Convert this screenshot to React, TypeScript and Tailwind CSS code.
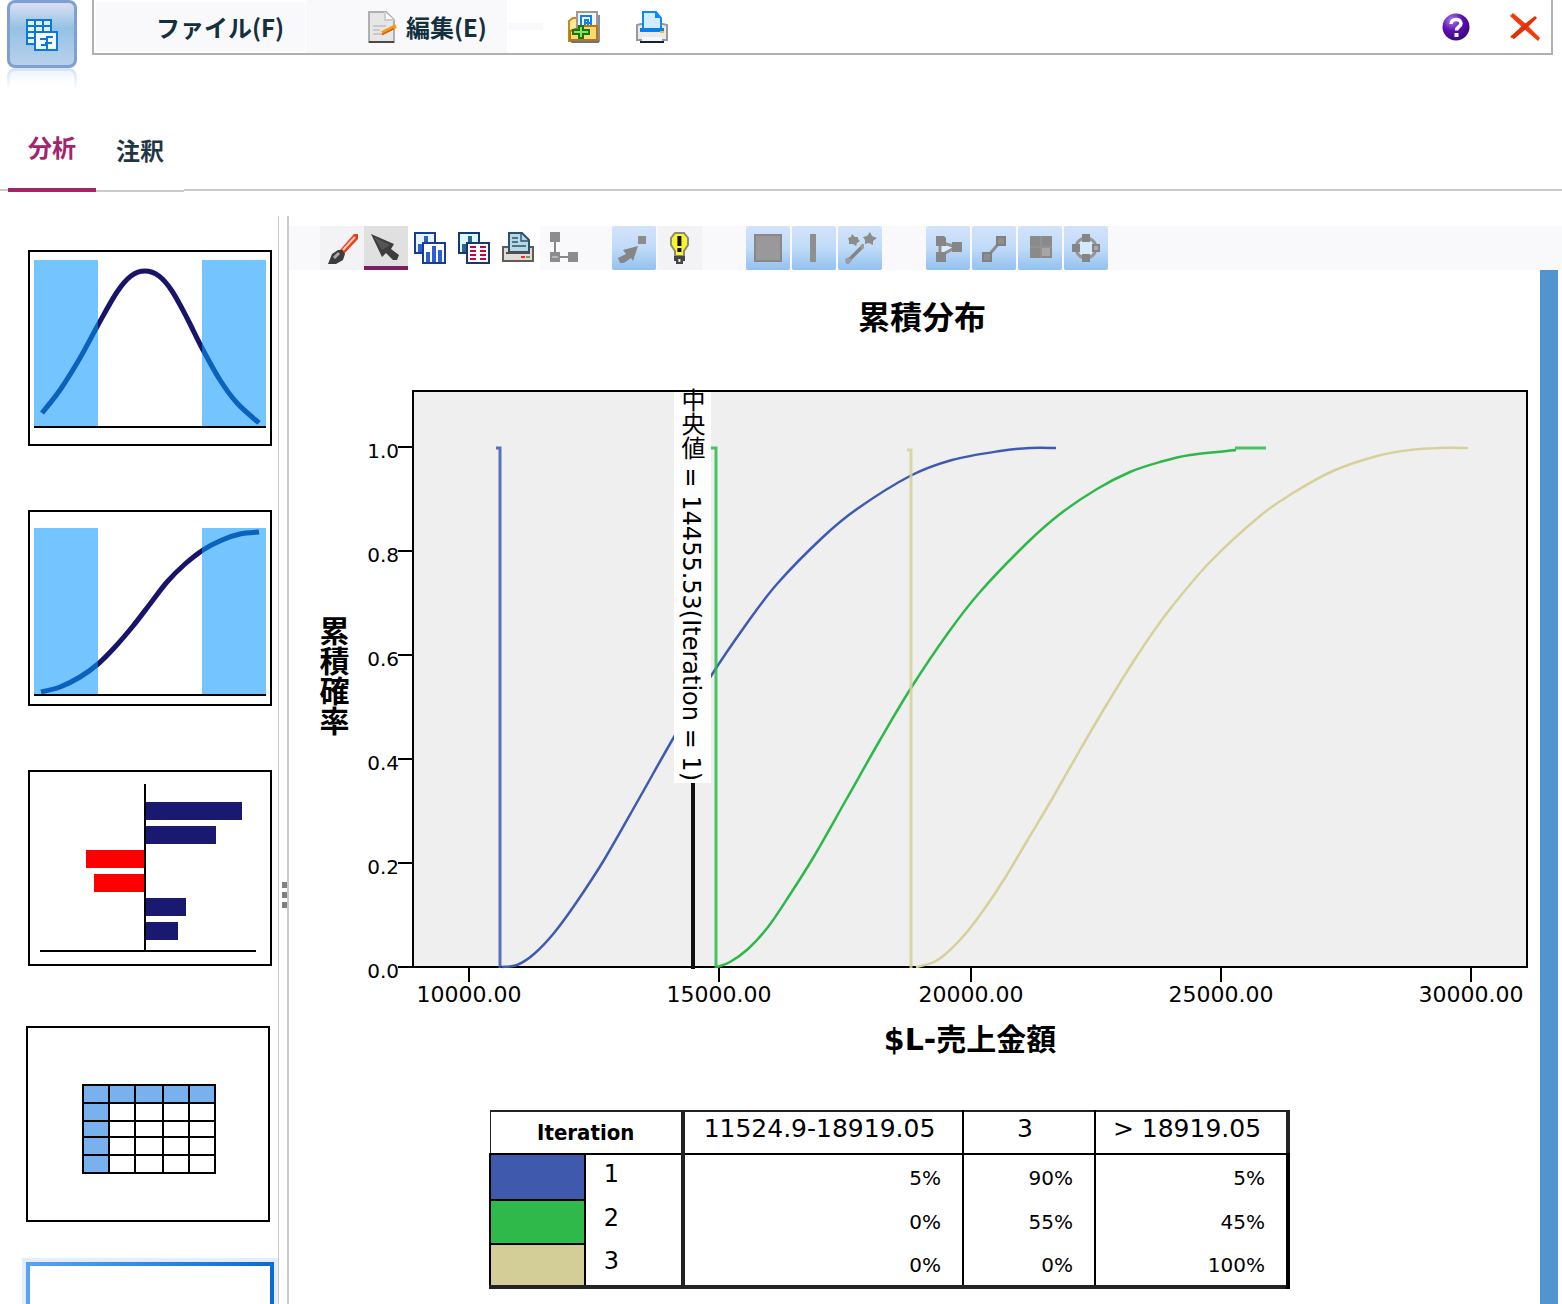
import type { ReactNode } from 'react';

type Point = [number, number];

// Catmull-Rom spline through the sample points
function smooth(points: Point[]) {
  let d = `M${points[0][0]} ${points[0][1]}`;
  for (let i = 0; i < points.length - 1; i++) {
    const p0 = points[i - 1] ?? points[i];
    const p1 = points[i];
    const p2 = points[i + 1];
    const p3 = points[i + 2] ?? p2;
    d += ` C${p1[0] + (p2[0] - p0[0]) / 6} ${p1[1] + (p2[1] - p0[1]) / 6} ${p2[0] - (p3[0] - p1[0]) / 6} ${
      p2[1] - (p3[1] - p1[1]) / 6
    } ${p2[0]} ${p2[1]}`;
  }
  return d;
}

const series: { color: string; drop: string; points: Point[] }[] = [
  {
    color: '#3f5bb0',
    drop: 'M207 178H211V698',
    points: [
      [213, 697], [228, 695], [245, 684], [265, 663], [287, 633], [315, 590], [351, 527], [385, 467],
      [422, 406], [456, 356], [488, 314], [534, 267], [568, 239], [621, 206], [663, 190], [711, 181], [741, 178], [767, 178],
    ],
  },
  {
    color: '#2db84a',
    drop: 'M422 178H427V698M946 178H977',
    points: [
      [428, 697], [441, 692], [459, 679], [479, 657], [500, 626], [524, 588], [557, 530], [591, 470],
      [622, 418], [659, 363], [691, 322], [738, 273], [771, 244], [808, 219], [841, 202], [871, 192], [901, 185],
      [947, 180],
    ],
  },
  {
    color: '#d6d09a',
    drop: 'M618 180H622V698',
    points: [
      [627, 697], [645, 692], [660, 681], [678, 662], [696, 638], [716, 608], [738, 571], [763, 529], [791, 480], [818, 434],
      [848, 386], [878, 343], [921, 292], [971, 246], [1004, 223], [1044, 201], [1088, 186], [1121, 180], [1151, 178], [1179, 178],
    ],
  },
];

const yTicks = [
  { label: '1.0', y: 177 },
  { label: '0.8', y: 281 },
  { label: '0.6', y: 385 },
  { label: '0.4', y: 489 },
  { label: '0.2', y: 593 },
  { label: '0.0', y: 697 },
];

const xTicks = [
  { label: '10000.00', x: 180 },
  { label: '15000.00', x: 430 },
  { label: '20000.00', x: 682 },
  { label: '25000.00', x: 932 },
  { label: '30000.00', x: 1182 },
];

const rows = [
  { id: '1', swatch: 'bg-[#3f5aac]', height: 'h-[46px]', values: ['5%', '90%', '5%'] },
  { id: '2', swatch: 'bg-[#2fb94a]', height: 'h-[44px]', values: ['0%', '55%', '45%'] },
  { id: '3', swatch: 'bg-[#d3ce97]', height: 'h-[43px]', values: ['0%', '0%', '100%'] },
];

const bell: Point[] = [
  [12, 161], [30, 138], [50, 106], [68, 73], [87, 40], [101, 24], [115, 19], [129, 24], [142, 39], [157, 66],
  [172, 96], [190, 128], [207, 151], [229, 171],
];

const sCurve: Point[] = [
  [11, 180], [30, 175], [50, 165], [68, 152], [85, 135], [103, 114], [120, 92], [137, 70], [155, 52], [173, 38],
  [192, 28], [210, 22], [229, 20],
];

function CurveThumb({ id, points, top, base }: { id: string; points: Point[]; top: number; base: number }) {
  const d = smooth(points);
  return (
    <svg viewBox="0 0 240 192" className="block w-full">
      <clipPath id={id}>
        <rect x="68" y="0" width="104" height="192" />
      </clipPath>
      <rect x="4" y={top} width="64" height={base - top} fill="#73c4ff" />
      <rect x="172" y={top} width="64" height={base - top} fill="#73c4ff" />
      <path d={d} fill="none" stroke="#0a62bd" strokeWidth="5" />
      <g clipPath={`url(#${id})`}>
        <rect x="68" y="0" width="104" height="192" fill="#fff" />
        <path d={d} fill="none" stroke="#17146a" strokeWidth="5" />
      </g>
      <rect x="4" y={base} width="232" height="2" />
    </svg>
  );
}

function TornadoThumb() {
  const bars = [
    [116, 30, 96], [116, 54, 70], [56, 78, 58], [64, 102, 50], [116, 126, 40], [116, 150, 32],
  ];
  return (
    <svg viewBox="0 0 240 192" className="block w-full">
      {bars.map(([x, y, w]) => (
        <rect key={y} x={x} y={y} width={w} height="18" fill={x < 100 ? '#f00' : '#191970'} />
      ))}
      <rect x="114" y="12" width="2" height="167" />
      <rect x="10" y="178" width="216" height="2" />
    </svg>
  );
}

function GridThumb() {
  return (
    <svg viewBox="0 0 240 192" className="block w-full">
      <rect x="54" y="56" width="134" height="18" fill="#79b0ee" />
      <rect x="54" y="56" width="27" height="90" fill="#79b0ee" />
      {[54, 80, 106, 134, 160, 186].map((x) => (
        <rect key={x} x={x} y="56" width="2" height="90" />
      ))}
      {[56, 74, 92, 108, 126, 144].map((y) => (
        <rect key={y} x="54" y={y} width="134" height="2" />
      ))}
    </svg>
  );
}

function Thumb({ label, children }: { label: string; children: ReactNode }) {
  return (
    <button aria-label={label} className="w-[244px] shrink-0 border-2 border-black bg-white">
      {children}
    </button>
  );
}

function ToolButton({ label, className, children }: { label: string; className?: string; children: ReactNode }) {
  return (
    <button aria-label={label} className={`size-11 shrink-0 ${className ?? ''}`}>
      <svg viewBox="0 0 22 22" className="block size-11">
        {children}
      </svg>
    </button>
  );
}

const blueTool = 'rounded-xs bg-linear-to-b from-[#d3e3fb] via-[#c0dbf8] to-[#92c1ef]';

function ToolBar() {
  return (
    <div className="flex bg-[#f9f9fb] pl-[31px]">
      <ToolButton label="brush" className="bg-[#f3f3f5]">
        <path d="M10 12L17 4H19V6.500L12 14Z" fill="#e8401c" />
        <path d="M11.500 12L17.500 5.500" stroke="#ffc9bd" strokeWidth="1" />
        <path d="M4 19L6 14L9 12H11L12.500 14L11.500 17L8 19Z" fill="#3c3c3c" />
        <path d="M7 16L9.500 13.500" stroke="#aaa" strokeWidth="1.500" />
      </ToolButton>
      <button aria-label="select" className="size-11 shrink-0 border-b-4 border-[#7d1f5e] bg-[#e0e0e0]">
        <svg viewBox="0 0 22 20" className="block w-11">
          <path d="M3.500 4L15 9L13.500 11.500L17.500 14.500L16.500 17L14.500 17L11 13.500L9 15.500Z" fill="#3d3d3d" />
          <path d="M5 5.500L13 9.500L9 12Z" fill="#555" />
        </svg>
      </button>
      <ToolButton label="charts" className="bg-white">
        <rect x="3.500" y="3.500" width="10" height="10" fill="#e9f3ff" stroke="#173f91" />
        <path d="M5 9H7V13H5ZM8 5H10V13H8Z" fill="#2c5fd4" />
        <rect x="7.500" y="8.500" width="11" height="10" fill="#fff" stroke="#173f91" />
        <path d="M9 13H11V18H9ZM12 10H14V18H12ZM15 12H17V18H15Z" fill="#2c5fd4" />
      </ToolButton>
      <ToolButton label="chart table" className="bg-white">
        <rect x="3.500" y="3.500" width="10" height="10" fill="#dcf7fb" stroke="#153a6f" />
        <path d="M8 5H10V9H8ZM5 9H7V13H5Z" fill="#2a6293" />
        <rect x="7.500" y="8.500" width="11" height="10" fill="#fff" stroke="#153a6f" />
        <path d="M9 10.500H12M9 12.500H12M9 14.500H12M9 16.500H12M14 10.500H17M14 12.500H17M14 14.500H17M14 16.500H17" stroke="#cc0048" />
      </ToolButton>
      <ToolButton label="print" className="bg-white">
        <rect x="3.500" y="10.500" width="15" height="7" fill="#dedbd8" stroke="#655a58" />
        <path d="M6.500 13V3.500H13L16.500 7V13Z" fill="#b9d8e4" stroke="#28546c" />
        <path d="M12.500 3.500V7.500H16.500M8 6H11M8 8H11M8 10H15" fill="none" stroke="#28546c" strokeWidth="0.700" />
        <path d="M5 13.500H17" stroke="#554b49" />
        <path d="M12.500 15.500H14.500" stroke="#f22" />
        <path d="M15 15.500H17" stroke="#5aa84f" />
      </ToolButton>
      <ToolButton label="hierarchy">
        <path d="M7.500 8V13M10 15.500H14" stroke="#888" />
        <path d="M5 3H10V8H5ZM5 13H10V18H5ZM14 13H19V18H14Z" fill="#8c8c8c" />
        <path d="M6 15.500H9" stroke="#b5b5b5" />
      </ToolButton>
      <div className="flex pl-7">
        <ToolButton label="point select" className={blueTool}>
          <rect x="13" y="5" width="4" height="4" fill="#8c8c8c" />
          <path d="M13 10L5.500 12L7 14L3 16L4 18.500H6L9.500 16L10.500 17.500Z" fill="#868686" />
        </ToolButton>
      </div>
      <div className="flex pl-0.5">
        <ToolButton label="hint" className="bg-[#f3f3f5]">
          <path d="M8.500 3.500H13L15 6V9.500L13 12.500V15H8.500V12.500L6.500 9.500V6Z" fill="#f8f52a" stroke="#8b8b72" />
          <path d="M8 15H13.500V17.500H12.500V19H9V17.500H8Z" fill="#444" />
          <path d="M9.700 5H11.700V10H9.700ZM9.700 11H11.700V13H9.700Z" fill="#111" />
          <path d="M10.700 16.500V18" stroke="#eee" />
        </ToolButton>
      </div>
      <div className="flex gap-0.5 pl-11">
        <ToolButton label="area" className={blueTool}>
          <rect x="4.500" y="4.500" width="13" height="13" fill="#999" stroke="#888" />
        </ToolButton>
        <ToolButton label="line" className={blueTool}>
          <rect x="9" y="4" width="3" height="14" fill="#8f8f8f" />
        </ToolButton>
        <ToolButton label="wand" className={blueTool}>
          <path d="M5 17.500L12.500 10" stroke="#858585" strokeWidth="1.800" />
          <path d="M3.500 16.500L5.500 15.500L7 17L5.500 19H4ZM11 10L12 9H13V11L12 12Z" fill="#9c9c9c" />
          <path d="M7 4L8.500 5.500H10L10 6.500L11 7.500L9.500 8.500L9 10L7.500 9H5.500V7.500L5 6L6.500 5.500Z" fill="#8c8c8c" />
          <path d="M16 3L17 5L19.500 6L17.500 7.500V9.500L15.500 8.500L13.500 9V7L12.500 5.500L14.500 5Z" fill="#8c8c8c" />
        </ToolButton>
      </div>
      <div className="flex gap-0.5 pl-11">
        <ToolButton label="polygon" className={blueTool}>
          <path d="M7 8V15L15 10.500Z" fill="#dcecff" stroke="#909090" strokeWidth="1.500" />
          <path d="M5 5H9L10 6V10H5ZM13 8H18V13H13ZM5 13H10V18H5Z" fill="#868686" />
        </ToolButton>
        <ToolButton label="segment" className={blueTool}>
          <path d="M8 15L14 8" stroke="#8c8c8c" strokeWidth="1.500" />
          <path d="M5 13H10V18H5ZM12 5H17V10H12Z" fill="#808080" />
          <path d="M6 14H9V17H6ZM13 6H16V9H13Z" fill="#8e8e8e" />
        </ToolButton>
        <ToolButton label="cells" className={blueTool}>
          <rect x="6" y="5" width="11" height="11" fill="#8a8a8a" />
          <path d="M11.500 5V16M6 10.500H17" stroke="#929292" />
          <rect x="12" y="11" width="4" height="4" fill="#a6a6a6" />
        </ToolButton>
        <ToolButton label="ring" className={blueTool}>
          <circle cx="11" cy="11" r="5" fill="#d5e8fd" stroke="#959595" strokeWidth="1.500" />
          <path d="M9 4H13V8H9ZM4 9H8V13H4ZM14 9H18V13H14ZM9 14H13V18H9Z" fill="#858585" />
          <path d="M15 10H17V12H15Z" fill="#aaa" />
        </ToolButton>
      </div>
    </div>
  );
}

function CumulativeChart() {
  return (
    <svg viewBox="0 0 1251 820" className="block w-full font-['DejaVu_Sans','Noto_Sans_CJK_JP',sans-serif]">
      <text x="633" y="59" textAnchor="middle" className="text-[32px] font-bold">
        累積分布
      </text>
      <rect x="124" y="121" width="1114" height="576" fill="#efefef" stroke="#000" strokeWidth="2" />
      {yTicks.map((t) => (
        <g key={t.label}>
          <path d={`M109 ${t.y}H124`} stroke="#000" strokeWidth="2" />
          <text x="110" y={t.y + 11} textAnchor="end" className="text-[20px]">
            {t.label}
          </text>
        </g>
      ))}
      {xTicks.map((t) => (
        <g key={t.label}>
          <path d={`M${t.x} 697V712`} stroke="#000" strokeWidth="2" />
          <text x={t.x} y="732" textAnchor="middle" className="text-[22px]">
            {t.label}
          </text>
        </g>
      ))}
      {series.map((s) => (
        <g key={s.color} fill="none" stroke={s.color}>
          <path d={s.drop} strokeWidth="3" strokeOpacity="0.850" />
          <path d={smooth(s.points)} strokeWidth="2.500" />
        </g>
      ))}
      <path d="M404 513V699" stroke="#111" strokeWidth="4" />
      <rect x="385" y="122" width="37" height="391" fill="#fff" />
      <text x="402" y="511" textAnchor="end" className="text-[24px] [writing-mode:vertical-rl]">
        中央値 = 14455.53(Iteration = 1)
      </text>
      <text x="43" y="406" textAnchor="middle" className="text-[30px] font-bold [writing-mode:vertical-rl]">
        累積確率
      </text>
      <text x="681" y="780" textAnchor="middle" className="text-[30px] font-bold">
        $L-売上金額
      </text>
    </svg>
  );
}

function IterationTable() {
  return (
    <table className="mt-5 ml-[200px] w-[798px] table-fixed border-collapse border-t-2 border-r-4 border-b-4 border-l border-[#222] font-['DejaVu_Sans',sans-serif] text-black">
      <colgroup>
        <col className="w-[95px]" />
        <col className="w-[98px]" />
        <col className="w-[280px]" />
        <col className="w-[132px]" />
        <col className="w-[193px]" />
      </colgroup>
      <thead>
        <tr className="h-[43px] border-b-2 border-black text-[25px] leading-6">
          <th colSpan={2} className="border-r-4 border-[#222] p-0 font-['DejaVu_Sans_Condensed','DejaVu_Sans',sans-serif] text-[22px]">
            Iteration
          </th>
          <th className="border-r-2 border-black p-0 pr-2 pb-2 font-normal whitespace-nowrap">11524.9-18919.05</th>
          <th className="border-r-2 border-black p-0 pr-2 pb-2 font-normal">3</th>
          <th className="p-0 pr-2 pb-2 font-normal whitespace-nowrap">&gt; 18919.05</th>
        </tr>
      </thead>
      <tbody>
        {rows.map((row) => (
          <tr key={row.id} className={row.height}>
            <td className={`border-2 border-black p-0 ${row.swatch}`} />
            <th className="border-r-4 border-[#222] p-0 pr-11 pb-2 text-[24px] leading-6 font-normal">{row.id}</th>
            {row.values.map((value, i) => (
              <td key={i} className="border-r-2 border-black p-0 pr-[21px] text-right text-[20px] leading-6 last:border-r-4">
                {value}
              </td>
            ))}
          </tr>
        ))}
      </tbody>
    </table>
  );
}

function Header() {
  return (
    <header className="flex gap-[15px] pr-[9px] pl-[7px]">
      <div className="h-[90px] w-[70px] shrink-0">
        <button aria-label="model" className="block h-[68px] w-full rounded-lg border-3 border-[#7f9fd2] bg-linear-to-b from-[#d3dcf0] from-5% via-[#94c2e5] via-40% to-[#b9d0ea]">
          <svg viewBox="0 0 64 64" className="block w-full">
            <g stroke="#0b78dc" strokeWidth="2">
              <rect x="17" y="17" width="24" height="24" fill="#e4f1fb" />
              <path d="M25 17V41M33 17V41M17 23H41M17 29H41M17 35H41" />
              <rect x="25" y="29" width="22" height="18" fill="#f2f8fd" />
              <path d="M37 46V34H43M30 36H37M35 40H42M31 42H37" fill="none" />
            </g>
          </svg>
        </button>
        <div className="h-[22px] rounded-t-lg border-x-3 border-t-3 border-[#d2e3f5] bg-linear-to-b from-[#eaf1fb] to-white [mask-image:linear-gradient(black,transparent)]" />
      </div>
      <div className="flex h-[55px] flex-1 items-center border-x-2 border-b-2 border-[#b0b0b0] pl-0.5 text-[24px] leading-8 font-bold text-[#13303d]">
        <button className="h-[49px] w-[209px] bg-[#f9f9fb] pl-[39px]">ファイル(F)</button>
        <button className="ml-px flex h-[53px] w-[201px] items-center gap-2 bg-[#f9f9fb] pl-[62px]">
          <svg viewBox="0 0 15 16" className="h-8 w-[30px]">
            <path d="M0.500 0.500H9L13 4.500V15.500H0.500Z" fill="#e6e6e6" stroke="#b0b0b0" />
            <path d="M8.500 0.500V4.500H13" fill="#fff" stroke="#ccc" />
            <path d="M2.500 7.500H9M2.500 9.500H6M2.500 11.500H7" stroke="#aaa" strokeWidth="0.600" />
            <path d="M0.500 15.500H13" stroke="#4a4a4a" />
            <path d="M7 11L14 7.500" stroke="#f39a12" strokeWidth="2" />
            <path d="M7 11.800L13 8.800" stroke="#dd5510" strokeWidth="0.800" />
          </svg>
          編集(E)
        </button>
        <div className="ml-px h-[7px] w-[35px] bg-[#f9f9fb]" />
        <button aria-label="add" className="ml-[25px]">
          <svg viewBox="0 0 16 16" className="block size-8">
            <path d="M0.500 5L2.500 3.500H5V15H0.500Z" fill="#ffe79a" stroke="#c2891c" />
            <rect x="4.500" y="0.500" width="10" height="10" fill="#f4f4f4" stroke="#9a9a9a" />
            <path d="M15.500 2V15H2V15.800H15.500" fill="none" stroke="#6c7288" strokeWidth="0.800" />
            <path d="M6.500 8V2.500H11.500V8M8.500 8V4.500H10V8M8 6H11" fill="none" stroke="#0a84ea" />
            <path d="M1 14.500V10L8 7.500H14.500V14.500Z" fill="#fcd874" stroke="#b8780f" />
            <path d="M6.500 7V14M2 10.500H11" stroke="#14780c" strokeWidth="3" />
            <path d="M6.500 8V13M3 10.500H10" stroke="#8be25a" strokeWidth="1" />
          </svg>
        </button>
        <button aria-label="print" className="ml-9">
          <svg viewBox="0 0 16 16" className="block size-8">
            <path d="M0.500 7L2.500 6.500H13.500L15.500 7V14.500H0.500Z" fill="#e9e9ee" stroke="#999" />
            <path d="M2 8.500H14V10.500H2Z" fill="#0a7fe8" />
            <path d="M3.500 9V0.500H10L12.500 3.500V9Z" fill="#d3ecff" stroke="#0a8cf5" />
            <path d="M9.500 0.500V3.500H12.500Z" fill="#0a8cf5" />
            <path d="M2 9.500H14" stroke="#0a7fe8" strokeWidth="2" />
            <path d="M12 10.500H14" stroke="#f0c020" />
            <path d="M3 13H13V15H3Z" fill="#f4f6fa" />
            <path d="M2 15.500H14" stroke="#16203c" />
          </svg>
        </button>
        <button aria-label="help" className="ml-auto">
          <svg viewBox="0 0 28 28" className="block size-7">
            <defs>
              <radialGradient id="help" cx="0.350" cy="0.250" r="0.800">
                <stop offset="0" stopColor="#b07be8" />
                <stop offset="0.500" stopColor="#5a0fb0" />
                <stop offset="1" stopColor="#3a0a78" />
              </radialGradient>
            </defs>
            <circle cx="14" cy="14" r="13.500" fill="url(#help)" />
            <path d="M9 11C9 5 19 5 19 10.500C19 14 14.500 13.500 14.500 17.500" fill="none" stroke="#fff" strokeWidth="3.500" />
            <rect x="12.500" y="20" width="4" height="4" fill="#fff" />
          </svg>
        </button>
        <button aria-label="close" className="mr-[11px] ml-10">
          <svg viewBox="0 0 30 28" className="block h-7 w-[30px]">
            <path d="M0 3L3 0L16 11L30 25L28 28L13 15Z" fill="#f43a08" />
            <path d="M25 3L27 5L16 16L4 26L0 24L12 13Z" fill="#e03008" />
          </svg>
        </button>
      </div>
    </header>
  );
}

export default function App() {
  return (
    <div className="flex h-screen flex-col overflow-hidden bg-white font-['Noto_Sans_CJK_JP',sans-serif]">
      <Header />
      <nav className="flex h-[102px] shrink-0 items-end text-[24px] leading-8 font-bold">
        <div className="mb-px w-2 border-b-2 border-[#cacaca]" />
        <button className="h-[66px] w-[88px] border-b-4 border-[#a3246b] pb-5 text-[#a3246b]">分析</button>
        <button className="h-[66px] w-[88px] border-b-2 border-[#cacaca] pb-4 text-[#1f3646]">注釈</button>
        <div className="mb-px flex-1 border-b-2 border-[#cacaca]" />
      </nav>
      <main className="flex min-h-0 flex-1 pt-6">
        <aside className="w-[279px] shrink-0 overflow-hidden border-r border-[#cacaca] pt-[34px]">
          <div className="flex flex-col gap-16 pl-7">
            <Thumb label="density">
              <CurveThumb id="density" points={bell} top={8} base={174} />
            </Thumb>
            <Thumb label="cumulative">
              <CurveThumb id="cumulative" points={sCurve} top={16} base={182} />
            </Thumb>
            <Thumb label="tornado">
              <TornadoThumb />
            </Thumb>
          </div>
          <div className="flex flex-col gap-10 pt-[60px] pl-[26px]">
            <Thumb label="table">
              <GridThumb />
            </Thumb>
            <button aria-label="options" className="h-[196px] w-[248px] bg-linear-to-r from-[#5aa2f4] via-[#2f87ea] to-[#0a6ad6] p-1 ring-4 ring-[#e3effc]">
              <span className="block h-full bg-white" />
            </button>
          </div>
        </aside>
        <div className="flex w-[10px] shrink-0 flex-col items-end gap-1 border-r-2 border-[#cacaca] pt-[666px]">
          <span className="h-1.5 w-[5px] bg-[#808080]" />
          <span className="h-1.5 w-[5px] bg-[#808080]" />
          <span className="h-1.5 w-[5px] bg-[#808080]" />
        </div>
        <section className="flex min-w-0 flex-1 flex-col pt-[10px]">
          <ToolBar />
          <div className="flex min-h-0 flex-1 pr-1">
            <div className="min-w-0 flex-1 overflow-hidden">
              <CumulativeChart />
              <IterationTable />
            </div>
            <div className="w-[18px] shrink-0 bg-[#5294cf]" />
          </div>
        </section>
      </main>
    </div>
  );
}
